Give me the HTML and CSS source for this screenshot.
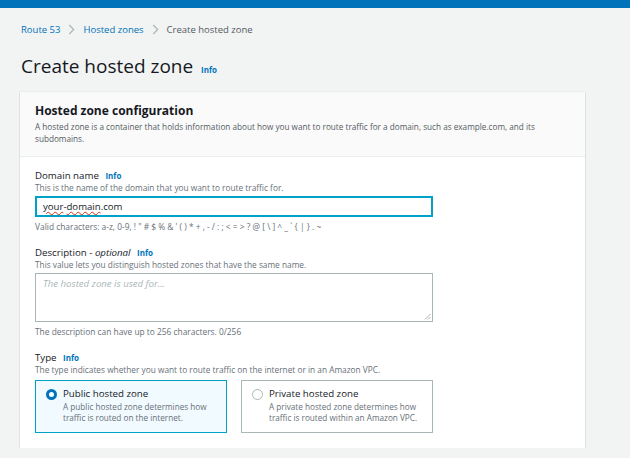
FILE: index.html
```html
<!DOCTYPE html>
<html lang="en">
<head>
  <meta charset="UTF-8">
  <meta name="viewport" content="width=device-width, initial-scale=1.0">
  <title>Create hosted zone</title>
  <link rel="stylesheet" href="styles.css">
</head>
<body>
  <div class="topbar"></div>
  <div class="page">
    <nav class="breadcrumbs">
      <a href="#">Route 53</a>
      <span class="sep">
        <svg width="7" height="11" viewBox="0 0 7 11"><path d="M1.2 1l4.5 4.5-4.5 4.5" fill="none" stroke="#aab7b8" stroke-width="1.2"/></svg>
      </span>
      <a href="#">Hosted zones</a>
      <span class="sep">
        <svg width="7" height="11" viewBox="0 0 7 11"><path d="M1.2 1l4.5 4.5-4.5 4.5" fill="none" stroke="#aab7b8" stroke-width="1.2"/></svg>
      </span>
      <span class="current">Create hosted zone</span>
    </nav>

    <h1>Create hosted zone <a class="info" href="#">Info</a></h1>

    <div class="card">
      <div class="card-header">
        <h2>Hosted zone configuration</h2>
        <p>A hosted zone is a container that holds information about how you want to route traffic for a domain, such as example.com, and its subdomains.</p>
      </div>
      <div class="card-body">
        <div class="field">
          <label class="label">Domain name <a class="info" href="#">Info</a></label>
          <div class="hint">This is the name of the domain that you want to route traffic for.</div>
          <div class="input focused"><span class="typed">your</span>-<span class="typed">domain</span>.com</div>
          <div class="constraint">Valid characters: a-z, 0-9, ! " # $ % &amp; ' ( ) * + , - / : ; &lt; = &gt; ? @ [ \ ] ^ _ ` { | } . ~</div>
        </div>

        <div class="field">
          <label class="label">Description - <i>optional</i> <a class="info" href="#">Info</a></label>
          <div class="hint">This value lets you distinguish hosted zones that have the same name.</div>
          <div class="textarea">
            <span class="placeholder">The hosted zone is used for...</span>
            <svg class="grip" width="7" height="7" viewBox="0 0 7 7"><path d="M6.5 1L1 6.5M6.5 4L4 6.5" stroke="#999" stroke-width="0.8"/></svg>
          </div>
          <div class="constraint">The description can have up to 256 characters. 0/256</div>
        </div>

        <div class="field">
          <label class="label">Type <a class="info" href="#">Info</a></label>
          <div class="hint">The type indicates whether you want to route traffic on the internet or in an Amazon VPC.</div>
          <div class="tiles">
            <div class="tile selected">
              <span class="radio checked"></span>
              <div>
                <div class="tile-title">Public hosted zone</div>
                <div class="tile-desc">A public hosted zone determines how traffic is routed on the internet.</div>
              </div>
            </div>
            <div class="tile">
              <span class="radio"></span>
              <div>
                <div class="tile-title">Private hosted zone</div>
                <div class="tile-desc">A private hosted zone determines how traffic is routed within an Amazon VPC.</div>
              </div>
            </div>
          </div>
        </div>
      </div>
    </div>
  </div>
</body>
</html>
```

FILE: styles.css
```css
body {
  margin: 0;
  font-family: "Open Sans", Arial, sans-serif;
  background-color: #f2f3f3;
  color: #16191f;
}

.topbar {
  height: 8px;
  background-color: #0073bb;
}

.page {
  padding: 13px 0 0 21px;
  width: 564px;
}

.breadcrumbs {
  display: flex;
  align-items: center;
  gap: 8px;
  font-size: 9.5px;
  height: 16px;
}

.breadcrumbs a {
  color: #0073bb;
  text-decoration: none;
}

.breadcrumbs .sep {
  display: flex;
}

.breadcrumbs .current {
  color: #545b64;
}

h1 {
  margin: 16px 0 9px;
  font-size: 19px;
  font-weight: 400;
  line-height: 26px;
}

.info {
  color: #0073bb;
  font-size: 8px;
  font-weight: 700;
  text-decoration: none;
  margin-left: 4px;
}

h1 .info {
  margin-left: 3px;
}

.card {
  margin-left: -1px;
  background: #fff;
  box-shadow: 0 1px 1px rgba(0, 31, 63, 0.3), 0 0 1px rgba(0, 31, 63, 0.2);
}

.card-header {
  background: #fafafa;
  padding: 10px 15px 11px;
  border-bottom: 1px solid #eaeded;
}

.card-header h2 {
  margin: 0 0 2px;
  font-size: 12px;
  font-weight: 700;
  line-height: 17px;
}

.card-header p {
  margin: 0;
  font-size: 8.2px;
  line-height: 12px;
  color: #545b64;
  max-width: 520px;
}

.card-body {
  padding: 12px 15px 15px;
}

.field {
  margin-bottom: 13px;
}

.field:last-child {
  margin-bottom: 0;
}

.label {
  display: block;
  font-size: 9.7px;
  line-height: 13px;
}

.label i {
  font-style: italic;
}

.hint {
  font-size: 8.3px;
  line-height: 12px;
  color: #687078;
}

.input {
  margin-top: 2px;
  width: 389px;
  height: 19px;
  border: 1px solid #00a1c9;
  box-shadow: 0 0 0 1px #00a1c9 inset;
  font-size: 9.6px;
  display: flex;
  align-items: center;
  padding-left: 7px;
}

.typed {
  text-decoration: underline wavy #d13212;
  text-decoration-thickness: 1px;
  text-underline-offset: 1px;
}

.constraint {
  font-size: 8.4px;
  line-height: 12px;
  color: #687078;
  margin-top: 4px;
}

.textarea {
  position: relative;
  margin-top: 2px;
  width: 389px;
  height: 47px;
  border: 1px solid #aab7b8;
  padding-left: 7px;
  font-size: 9.6px;
  line-height: 20px;
}

.placeholder {
  color: #aab7b8;
  font-style: italic;
}

.grip {
  position: absolute;
  right: 1px;
  bottom: 1px;
}

.tiles {
  display: flex;
  gap: 14px;
  margin-top: 4px;
}

.tile {
  box-sizing: border-box;
  width: 192px;
  height: 53px;
  border: 1px solid #aab7b8;
  padding: 6px 10px 0 10px;
  display: flex;
  gap: 6px;
  align-items: flex-start;
}

.tile.selected {
  background: #f1faff;
  border-color: #00a1c9;
}

.radio {
  box-sizing: border-box;
  width: 11px;
  height: 11px;
  border: 1px solid #aab7b8;
  border-radius: 50%;
  margin-top: 1.5px;
  flex: 0 0 auto;
  background: #fff;
}

.radio.checked {
  border: 3.5px solid #0073bb;
}

.tile-title {
  font-size: 9.7px;
  line-height: 14px;
}

.tile-desc {
  font-size: 8.2px;
  line-height: 11px;
  color: #687078;
}
```
